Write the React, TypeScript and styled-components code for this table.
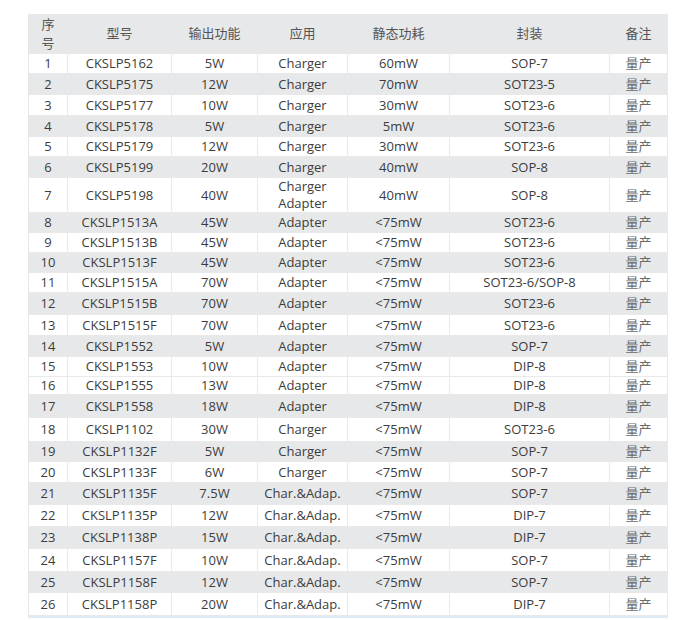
import styled, { createGlobalStyle } from 'styled-components';

const GlobalStyle = createGlobalStyle`
  body {
    margin: 0;
    background: #ffffff;
    font-family: "Open Sans", "Noto Sans CJK SC", sans-serif;
  }
`;

const Page = styled.div`
  padding: 14px 0 0 28px;
`;

const Table = styled.div`
  display: flex;
  flex-direction: column;
  width: 640px;
  border-left: 1px solid #e6e6e6;
  border-bottom: 2px solid #dcebf5;
  box-sizing: border-box;
`;

const Row = styled.div<{ $h: number; $shade: boolean }>`
  display: grid;
  grid-template-columns: 39px 104px 86px 90px 102px 160px 58px;
  height: ${(p) => p.$h}px;
  background: ${(p) => (p.$shade ? '#e7e8ea' : '#ffffff')};
`;

const Cell = styled.div<{ $head?: boolean; $muted?: boolean }>`
  display: flex;
  flex-direction: column;
  align-items: center;
  justify-content: center;
  text-align: center;
  border-right: 1px solid #e9e9e9;
  border-bottom: 1px solid #e9e9e9;
  font-size: 13px;
  line-height: ${(p) => (p.$head ? '19px' : '17px')};
  color: ${(p) => (p.$head ? '#555555' : p.$muted ? '#6a6a6a' : '#3c3c3c')};
  white-space: nowrap;
`;

type Item = [string, string, string, string, string, string, number, boolean];

const rows: Item[] = [
  ['1', 'CKSLP5162', '5W', 'Charger', '60mW', 'SOP-7', 20, false],
  ['2', 'CKSLP5175', '12W', 'Charger', '70mW', 'SOT23-5', 21, true],
  ['3', 'CKSLP5177', '10W', 'Charger', '30mW', 'SOT23-6', 21, false],
  ['4', 'CKSLP5178', '5W', 'Charger', '5mW', 'SOT23-6', 21, true],
  ['5', 'CKSLP5179', '12W', 'Charger', '30mW', 'SOT23-6', 20, false],
  ['6', 'CKSLP5199', '20W', 'Charger', '40mW', 'SOP-8', 21, true],
  ['7', 'CKSLP5198', '40W', 'Charger\nAdapter', '40mW', 'SOP-8', 35, false],
  ['8', 'CKSLP1513A', '45W', 'Adapter', '<75mW', 'SOT23-6', 20, true],
  ['9', 'CKSLP1513B', '45W', 'Adapter', '<75mW', 'SOT23-6', 20, false],
  ['10', 'CKSLP1513F', '45W', 'Adapter', '<75mW', 'SOT23-6', 20, true],
  ['11', 'CKSLP1515A', '70W', 'Adapter', '<75mW', 'SOT23-6/SOP-8', 20, false],
  ['12', 'CKSLP1515B', '70W', 'Adapter', '<75mW', 'SOT23-6', 22, true],
  ['13', 'CKSLP1515F', '70W', 'Adapter', '<75mW', 'SOT23-6', 21, false],
  ['14', 'CKSLP1552', '5W', 'Adapter', '<75mW', 'SOP-7', 21, true],
  ['15', 'CKSLP1553', '10W', 'Adapter', '<75mW', 'DIP-8', 20, false],
  ['16', 'CKSLP1555', '13W', 'Adapter', '<75mW', 'DIP-8', 18, false],
  ['17', 'CKSLP1558', '18W', 'Adapter', '<75mW', 'DIP-8', 23, true],
  ['18', 'CKSLP1102', '30W', 'Charger', '<75mW', 'SOT23-6', 24, false],
  ['19', 'CKSLP1132F', '5W', 'Charger', '<75mW', 'SOP-7', 20, true],
  ['20', 'CKSLP1133F', '6W', 'Charger', '<75mW', 'SOP-7', 21, false],
  ['21', 'CKSLP1135F', '7.5W', 'Char.&Adap.', '<75mW', 'SOP-7', 22, true],
  ['22', 'CKSLP1135P', '12W', 'Char.&Adap.', '<75mW', 'DIP-7', 22, false],
  ['23', 'CKSLP1138P', '15W', 'Char.&Adap.', '<75mW', 'DIP-7', 22, true],
  ['24', 'CKSLP1157F', '10W', 'Char.&Adap.', '<75mW', 'SOP-7', 23, false],
  ['25', 'CKSLP1158F', '12W', 'Char.&Adap.', '<75mW', 'SOP-7', 21, true],
  ['26', 'CKSLP1158P', '20W', 'Char.&Adap.', '<75mW', 'DIP-7', 23, false],
];

const lines = (text: string) =>
  text.split('\n').map((t) => <span key={t}>{t}</span>);

export default function App() {
  return (
    <>
      <GlobalStyle />
      <Page>
        <Table>
          <Row $h={40} $shade>
            <Cell $head>
              <span>序</span>
              <span>号</span>
            </Cell>
            <Cell $head>型号</Cell>
            <Cell $head>输出功能</Cell>
            <Cell $head>应用</Cell>
            <Cell $head>静态功耗</Cell>
            <Cell $head>封装</Cell>
            <Cell $head>备注</Cell>
          </Row>
          {rows.map(([no, model, power, app, standby, pkg, h, shade]) => (
            <Row key={no} $h={h} $shade={shade}>
              <Cell>{no}</Cell>
              <Cell>{model}</Cell>
              <Cell>{power}</Cell>
              <Cell>{lines(app)}</Cell>
              <Cell>{standby}</Cell>
              <Cell>{pkg}</Cell>
              <Cell $muted>量产</Cell>
            </Row>
          ))}
        </Table>
      </Page>
    </>
  );
}
